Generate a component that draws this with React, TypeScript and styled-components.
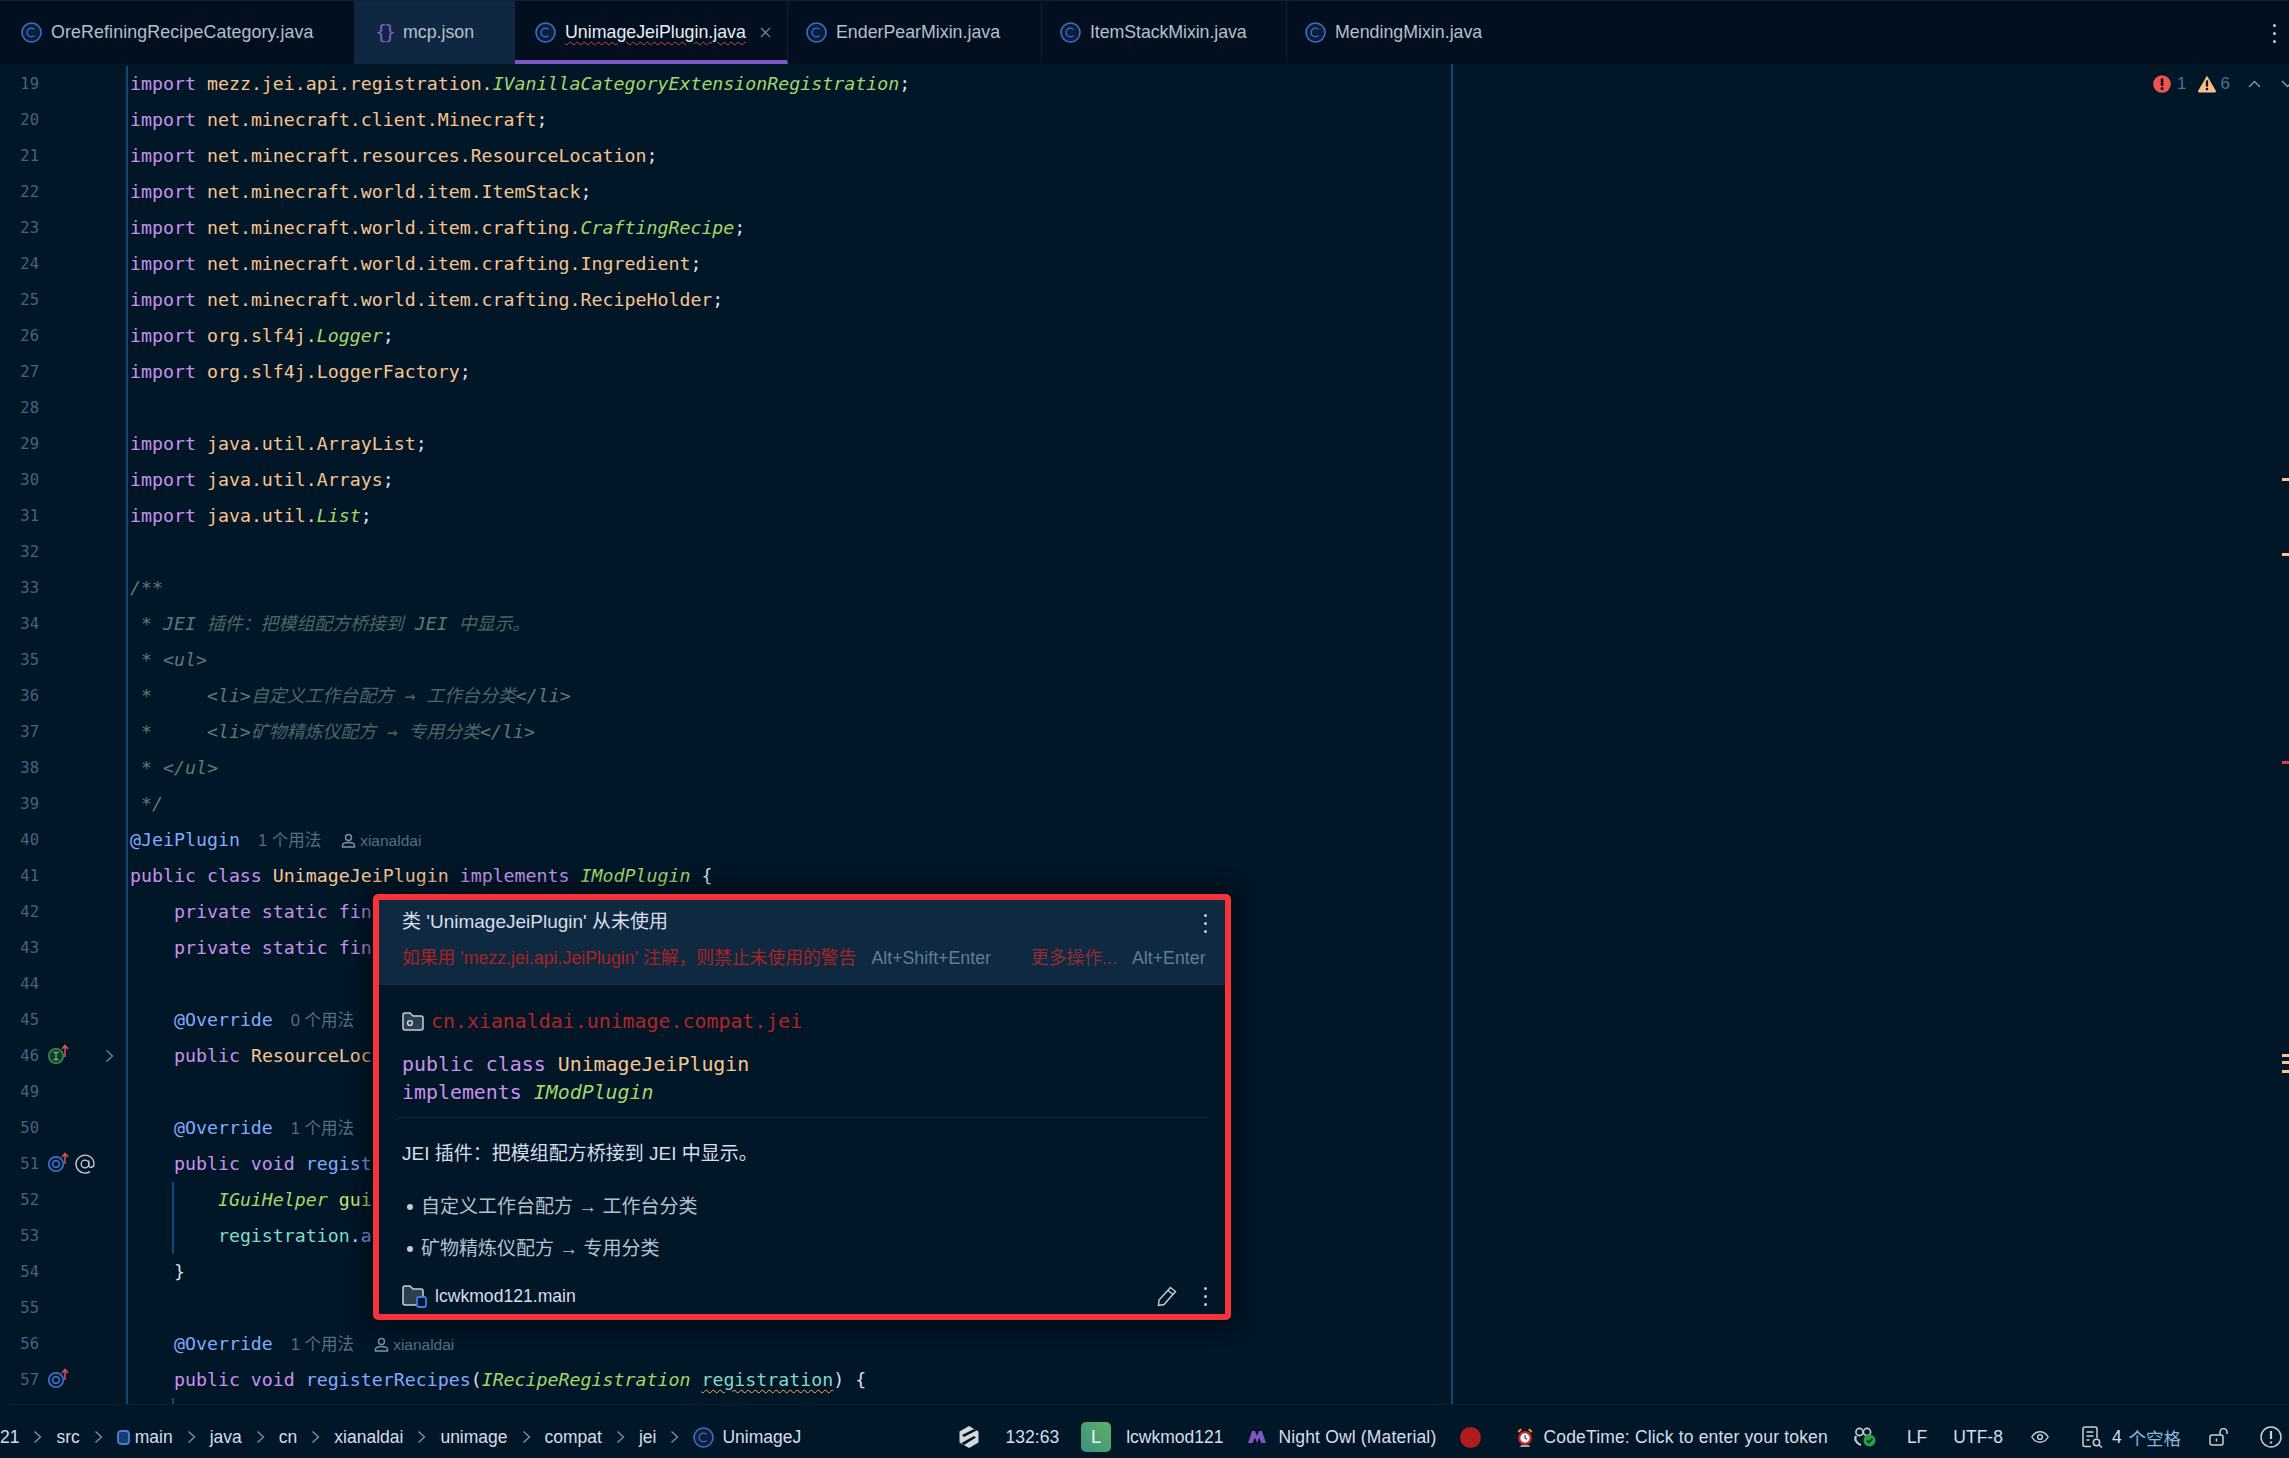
import React from "react";
import styled, { createGlobalStyle } from "styled-components";

const Global = createGlobalStyle`
  html, body { margin: 0; padding: 0; background: #011627; }
  #root { width: 2289px; height: 1458px; overflow: hidden; }
`;

const SANS = `"Liberation Sans", "Noto Sans CJK SC", sans-serif`;
const MONO = `"DejaVu Sans Mono", "Noto Sans CJK SC", monospace`;

const Window = styled.div`
  width: 2289px; height: 1458px; display: flex; flex-direction: column;
  background: #011627; color: #d6deeb; font-family: ${SANS};
`;
const TabBar = styled.div`
  height: 64px; flex: none; display: flex; background: #010f1f; border-top: 1px solid #0b2236; box-sizing: border-box;
  position: relative;
`;
const Tab = styled.div<{ $w: number; $pad: number; $bg?: string; $active?: boolean; $sep?: boolean }>`
  width: ${p => p.$w}px; padding: 3px 0 0 ${p => p.$pad}px; box-sizing: border-box; display: flex; align-items: center; gap: 9px;
  font-size: 17.8px; color: ${p => (p.$active ? "#e6edf5" : "#b4c0cc")};
  background: ${p => p.$bg || "transparent"};
  border-bottom: 4px solid ${p => (p.$active ? "#7e57c2" : "transparent")};
  border-right: ${p => (p.$sep ? "1px solid #0c2234" : "none")};
`;
const TabName = styled.span<{ $err?: boolean; $ls?: number }>`
  letter-spacing: ${p => p.$ls || 0}px;
  ${p => p.$err && "text-decoration: underline wavy #d8433f; text-decoration-thickness: 1px; text-underline-offset: 3px;"}
`;
const Close = styled.span`
  margin-left: 5px; display: flex;
`;
const Braces = styled.span`
  width: 20px; font-family: "DejaVu Sans Mono", monospace; font-size: 20px; color: #7a5fc4; text-align: center; letter-spacing: -3px; flex: none;
`;
const Kebab = styled.div<{ $top: number; $right: number }>`
  position: absolute; top: ${p => p.$top}px; right: ${p => p.$right}px; display: flex; flex-direction: column; gap: 5px;
  & > i { width: 3px; height: 3px; border-radius: 50%; background: #c3ccd6; display: block; }
`;

const Editor = styled.div`
  flex: 1; min-height: 0; position: relative; overflow: hidden; padding-top: 2px; box-sizing: border-box;
  border-bottom: 1px solid #06202f; border-radius: 0 0 0 10px;
`;
const Row = styled.div`
  height: 36px; display: flex; align-items: stretch;
`;
const Gutter = styled.div`
  width: 126px; flex: none; display: flex; align-items: center; position: relative;
`;
const LineNo = styled.span`
  width: 39px; text-align: right; font-family: "DejaVu Sans Mono", monospace; font-size: 15.5px; color: #4b6479; flex: none;
`;
const GutterIcons = styled.span`
  margin-left: 9px; display: flex; align-items: center; gap: 3px;
`;
const Fold = styled.span`
  position: absolute; left: 105px; top: 11px; display: flex;
`;
const Code = styled.div`
  flex: 1; border-left: 2px solid #0d4a78; padding-left: 2px;
  font-family: ${MONO}; font-size: 18.25px; line-height: 36px; white-space: pre; position: relative; color: #d6deeb;
`;
const Indent = styled.span`
  position: absolute; left: 44px; top: 0; bottom: 0; width: 2px; background: #0d4a78;
`;
const Kw = styled.span` color: #c792ea; `;
const Pkg = styled.span` color: #f6c48f; `;
const Cls = styled.span` color: #a6d66a; font-style: italic; `;
const Anno = styled.span` color: #82aaff; `;
const Fn = styled.span` color: #82aaff; `;
const Var = styled.span` color: #7fdbca; `;
const Yel = styled.span` color: #c5e478; `;
const Cmt = styled.span` color: #5f7a7a; font-style: italic; `;
const Zh = styled.span` color: #4c6767; font-size: 17.9px; `;
const Wavy = styled.span`
  color: #7fdbca; text-decoration: underline wavy #f0b06a; text-decoration-thickness: 1px; text-underline-offset: 3px;
`;
const Hint = styled.span`
  margin-left: 18px; font-family: ${SANS}; font-size: 16.5px; color: #55707f;
`;
const Author = styled.span`
  margin-left: 20px; font-family: ${SANS}; font-size: 15.5px; color: #55707f;
  & svg { vertical-align: -2px; margin-right: 4px; }
`;
const RightGuide = styled.div`
  position: absolute; left: 1451px; top: 0; bottom: 0; width: 2px; background: #0d4a78;
`;
const Inspect = styled.div`
  position: absolute; left: 2153px; right: 0; top: 8px; height: 24px; font-size: 17px; color: #44749c;
  display: flex; align-items: center; overflow: hidden;
`;
const InspectNum = styled.span<{ $ml: number }>` margin-left: ${p => p.$ml}px; flex: none; display: flex; `;
const Stripe = styled.div<{ $y: number; $c: string }>`
  position: absolute; right: 0; top: ${p => p.$y}px; width: 7px; height: 3px; background: ${p => p.$c};
`;

const Popup = styled.div`
  position: absolute; left: 373px; top: 830px; width: 858px; height: 426px; box-sizing: border-box;
  border: 6px solid #f4343a; border-radius: 5px; background: #011627; display: flex; flex-direction: column;
  box-shadow: 0 0 18px 6px rgba(0, 8, 18, 0.7);
`;
const PopHead = styled.div`
  height: 85px; flex: none; background: #0e2940; border-bottom: 1px solid #12304a; box-sizing: border-box; padding: 4px 18px 0 23px; position: relative;
`;
const PopTitle = styled.div`
  height: 36px; line-height: 36px; color: #d6deeb; font-size: 19px;
`;
const PopActions = styled.div`
  height: 36px; line-height: 36px; display: flex; font-size: 17.8px; color: #5f7e97;
`;
const RedAct = styled.span<{ $dim?: boolean; $ml?: number }>`
  color: ${p => (p.$dim ? "#8e2e36" : "#a92325")}; margin-left: ${p => p.$ml || 0}px;
`;
const Key = styled.span<{ $ml: number }>` margin-left: ${p => p.$ml}px; `;
const PopBody = styled.div`
  padding: 21px 18px 0 23px; flex: 1; position: relative;
`;
const PkgLine = styled.div`
  display: flex; align-items: center; gap: 7px; font-family: ${MONO}; font-size: 19.9px; color: #b32424; height: 30px;
`;
const Sig = styled.div`
  font-family: ${MONO}; font-size: 19.9px; line-height: 28px; margin-top: 15px; white-space: pre;
`;
const Rule = styled.div`
  height: 1px; background: #12293c; margin: 10px 0 0 -4px;
`;
const Doc = styled.div`
  margin-top: 21px; height: 30px; line-height: 30px; font-size: 19px; color: #d6deeb;
`;
const Bullet = styled.div<{ $mt: number }>`
  margin-top: ${p => p.$mt}px; height: 30px; line-height: 30px; font-size: 19px; color: #b4c2d0; display: flex; align-items: center; padding-left: 5px; gap: 8px;
  &::before { content: ""; width: 6px; height: 6px; border-radius: 50%; background: #c3ccd6; }
`;
const PopFoot = styled.div`
  position: absolute; left: 23px; right: 18px; bottom: 0; height: 36px; display: flex; align-items: center; gap: 8px; font-size: 17.6px; color: #d6deeb;
`;
const FootRight = styled.div`
  margin-left: auto; display: flex; align-items: center; gap: 27px;
`;
const VDots = styled.div`
  display: flex; flex-direction: column; gap: 5px;
  & > i { width: 3px; height: 3px; border-radius: 50%; background: #c3ccd6; display: block; }
`;
const HeadDots = styled.div`
  position: absolute; right: 18px; top: 14px;
`;

const Status = styled.div`
  height: 53px; flex: none; box-sizing: border-box; padding-top: 11px; display: flex; align-items: center; font-size: 17.5px; color: #d6deeb; background: #011627;
`;
const Crumbs = styled.div`
  width: 805px; flex: none; display: flex; align-items: center; gap: 14px; overflow: hidden; white-space: nowrap;
`;
const CrumbItem = styled.span<{ $gap?: number }>`
  display: inline-flex; align-items: center; gap: ${p => p.$gap || 5}px; flex: none;
`;
const Right = styled.div`
  margin-left: auto; padding-right: 7px; display: flex; align-items: center; white-space: nowrap;
`;
const SItem = styled.span<{ $ml: number; $wide?: boolean }>`
  margin-left: ${p => p.$ml}px; display: inline-flex; align-items: center; flex: none;
  ${p => p.$wide && "letter-spacing: 0.17px;"}
`;
const Badge = styled.span`
  width: 30px; height: 30px; border-radius: 5px; background: linear-gradient(45deg, #3a917f, #5fb065); color: #eef7f0; display: flex; align-items: center; justify-content: center; font-size: 18px;
`;
const RedDot = styled.span`
  width: 21px; height: 21px; border-radius: 50%; background: #b01c1c; display: block;
`;
const Blue = styled.span` color: #8db6dc; margin-left: 2px; `;

const ClassIcon = ({ size = 21 }: { size?: number }) => (
  <svg width={size} height={size} viewBox="0 0 21 21" style={{ flex: "none" }}>
    <circle cx="10.5" cy="10.5" r="9.5" fill="#0e1e3a" stroke="#3f6fc6" strokeWidth="1.6" />
    <path d="M13.6 7.4a4.4 4.4 0 1 0 0 6.2" fill="none" stroke="#3f6fc6" strokeWidth="1.3" />
  </svg>
);
const CloseIcon = () => (
  <svg width="11" height="11" viewBox="0 0 12 12"><path d="M1 1l10 10M11 1L1 11" stroke="#78858f" strokeWidth="1.4" /></svg>
);
const Person = () => (
  <svg width="15" height="15" viewBox="0 0 15 15" fill="none" stroke="#7f93a3" strokeWidth="1.4">
    <circle cx="7.5" cy="4.5" r="3" />
    <path d="M1.5 14v-1.5c0-2 2-3 6-3s6 1 6 3V14z" />
  </svg>
);
const ImplIcon = () => (
  <svg width="23" height="22" viewBox="0 0 23 22" fill="none" style={{ marginTop: -3 }}>
    <circle cx="8" cy="12" r="7.2" fill="#0f3a2a" stroke="#3f8a4f" strokeWidth="1.6" />
    <path d="M5.5 8.5h5M5.5 15.5h5M8 8.5v7" stroke="#6fae6a" strokeWidth="1.3" />
    <path d="M17 13V2M14 5l3-3.5L20 5" stroke="#d9535f" strokeWidth="1.5" />
  </svg>
);
const OverIcon = () => (
  <svg width="23" height="22" viewBox="0 0 23 22" fill="none" style={{ marginTop: -3 }}>
    <circle cx="8" cy="12" r="7.2" stroke="#3f6fc6" strokeWidth="1.8" />
    <circle cx="8" cy="12" r="3.4" stroke="#3f6fc6" strokeWidth="1.8" />
    <path d="M17 12V2M14 5l3-3.5L20 5" stroke="#d9535f" strokeWidth="1.5" />
  </svg>
);
const AtIcon = () => (
  <svg width="22" height="22" viewBox="0 0 22 22" fill="none" stroke="#c8d0d8" strokeWidth="1.3">
    <circle cx="11" cy="11" r="3.8" />
    <path d="M14.8 7.5v5c0 2.6 5.2 2.6 5.2-1.5a9 9 0 1 0-4 7.6" />
  </svg>
);
const ChevronR = ({ c = "#8295a5" }: { c?: string }) => (
  <svg width="9" height="14" viewBox="0 0 9 14" style={{ flex: "none" }}>
    <path d="M1.5 1.5L7.5 7l-6 5.5" fill="none" stroke={c} strokeWidth="1.3" />
  </svg>
);
const Cv = ({ up }: { up?: boolean }) => (
  <svg width="13" height="8" viewBox="0 0 13 8" style={{ display: "block" }}>
    <path d={up ? "M1 7l5.5-5.5L12 7" : "M1 1l5.5 5.5L12 1"} fill="none" stroke="#8a9aa8" strokeWidth="1.4" />
  </svg>
);
const PkgIcon = () => (
  <svg width="22" height="20" viewBox="0 0 22 20" style={{ flex: "none" }} fill="none">
    <path d="M1 4a2 2 0 0 1 2-2h5l3 3h8a2 2 0 0 1 2 2v10a2 2 0 0 1-2 2H3a2 2 0 0 1-2-2z" fill="#2a3f50" stroke="#c8d0d8" strokeWidth="1.5" />
    <circle cx="8" cy="12" r="2.4" stroke="#d6deeb" strokeWidth="1.4" />
  </svg>
);
const ModuleIcon = () => (
  <svg width="25" height="24" viewBox="0 0 25 24" style={{ flex: "none" }} fill="none">
    <path d="M1 4a2 2 0 0 1 2-2h5l3 3h8a2 2 0 0 1 2 2v12a2 2 0 0 1-2 2H3a2 2 0 0 1-2-2z" fill="#2a3f50" stroke="#c8d0d8" strokeWidth="1.5" />
    <rect x="15" y="13" width="9" height="10" rx="2" fill="#011627" stroke="#3f7fe0" strokeWidth="1.8" />
  </svg>
);
const Pencil = () => (
  <svg width="20" height="20" viewBox="0 0 20 20" fill="none" stroke="#c8d0d8" strokeWidth="1.4">
    <path d="M13.5 1.5l5 4L7 18.5l-5.5 1 .5-5.5z" />
    <path d="M11 4.5l5 4" />
  </svg>
);
const ErrIcon = () => (
  <svg width="18" height="18" viewBox="0 0 19 19" style={{ flex: "none" }}><circle cx="9.5" cy="9.5" r="9.3" fill="#ef5350" />
    <rect x="8.2" y="3.5" width="2.8" height="8" rx="1" fill="#1a1014" /><circle cx="9.6" cy="14.2" r="1.6" fill="#1a1014" /></svg>
);
const WarnIcon = () => (
  <svg width="18" height="18" viewBox="0 0 19 18" style={{ flex: "none" }}><path d="M9.5 1L18.5 16.5Q18.8 17.5 18 17.5H1Q.2 17.5.5 16.5z" fill="#f4c088" stroke="#f4c088" strokeLinejoin="round" />
    <rect x="8.3" y="5" width="2.4" height="7" rx=".8" fill="#1a1410" /><circle cx="9.5" cy="14.4" r="1.4" fill="#1a1410" /></svg>
);
const ModSquare = () => (
  <svg width="13" height="15" viewBox="0 0 13 15" style={{ flex: "none" }}><rect x="1" y="1" width="11" height="13" rx="3" fill="#1a3c74" stroke="#4a7fdc" strokeWidth="1.8" /></svg>
);
const VcsIcon = () => (
  <svg width="20" height="22" viewBox="0 0 20 22">
    <path d="M10 0l9.5 5.5v11L10 22 .5 16.5v-11z" fill="#d4d9de" />
    <path d="M3 9l12-6 2.5 1.6L5 11zM2.5 17l12.5-7 2 1.4L5 19z" fill="#011627" />
  </svg>
);
const MIcon = () => (
  <svg width="18" height="12" viewBox="0 0 18 12"><path d="M0 12L4 0h3l2 5 2-5h3l4 12h-4.5L11 6.5 9 12 7 6.5 4.5 12z" fill="#7e57c2" /></svg>
);
const Clock = () => (
  <svg width="16" height="19" viewBox="0 0 16 19" fill="none">
    <circle cx="8" cy="10" r="5.8" fill="#f4f6f8" stroke="#c62828" strokeWidth="2.2" />
    <path d="M8 7v3l2 1.4" stroke="#333" strokeWidth="1.1" />
    <path d="M1.2 4l3-2.8M14.8 4l-3-2.8" stroke="#e0a030" strokeWidth="2" />
    <path d="M3.5 18h9" stroke="#9aa5ae" strokeWidth="2" />
  </svg>
);
const Copilot = () => (
  <svg width="22" height="20" viewBox="0 0 22 20" fill="none">
    <circle cx="5.5" cy="5" r="3.6" stroke="#c8d0d8" strokeWidth="1.6" />
    <circle cx="13" cy="5" r="3.6" stroke="#c8d0d8" strokeWidth="1.6" />
    <path d="M2 9c-1.5 3-.5 7 5 9" stroke="#c8d0d8" strokeWidth="2.2" />
    <circle cx="15.5" cy="13.5" r="6" fill="#25a244" />
    <path d="M12.8 13.5l2 2 3.6-3.8" stroke="#04210e" strokeWidth="1.5" />
  </svg>
);
const Eye = () => (
  <svg width="18" height="12" viewBox="0 0 18 12" fill="none" stroke="#c8d0d8" strokeWidth="1.4">
    <path d="M.8 6C3 2.5 5.8.8 9 .8S15 2.5 17.2 6C15 9.5 12.2 11.2 9 11.2S3 9.5.8 6z" /><circle cx="9" cy="6" r="2.4" />
  </svg>
);
const DocSearch = () => (
  <svg width="21" height="22" viewBox="0 0 21 22" fill="none" stroke="#c8d0d8" strokeWidth="1.5">
    <path d="M9 20.5H3a2 2 0 0 1-2-2V3a2 2 0 0 1 2-2h10a2 2 0 0 1 2 2v9" />
    <path d="M4.5 6h7M4.5 10h7M4.5 14h3" />
    <circle cx="14.5" cy="16.5" r="3.2" /><path d="M17 19l3 2.5" />
  </svg>
);
const Lock = () => (
  <svg width="20" height="18" viewBox="0 0 20 18" fill="none" stroke="#c8d0d8" strokeWidth="1.5">
    <rect x="1" y="7" width="13" height="10" rx="2" />
    <path d="M7.5 10.5v3" /><path d="M11 7V4a3.5 3.5 0 0 1 7 0v2" />
  </svg>
);
const Alert = () => (
  <svg width="22" height="22" viewBox="0 0 22 22" fill="none" stroke="#c8d0d8" strokeWidth="1.5">
    <circle cx="11" cy="11" r="10" />
    <path d="M11 5v8M11 15.5v2" strokeWidth="2.2" />
  </svg>
);

const imp = (pkg: string, cls?: string) => (
  <>
    <Kw>import</Kw> <Pkg>{pkg}</Pkg>
    {cls && <Cls>{cls}</Cls>};
  </>
);
const Uses = ({ n }: { n: number }) => <Hint>{n} 个用法</Hint>;

type L = { n: number; icons?: React.ReactNode; fold?: boolean; guide?: boolean; noNum?: boolean; body?: React.ReactNode };
const I4 = "    ";
const lines: L[] = [
  { n: 19, body: imp("mezz.jei.api.registration.", "IVanillaCategoryExtensionRegistration") },
  { n: 20, body: imp("net.minecraft.client.Minecraft") },
  { n: 21, body: imp("net.minecraft.resources.ResourceLocation") },
  { n: 22, body: imp("net.minecraft.world.item.ItemStack") },
  { n: 23, body: imp("net.minecraft.world.item.crafting.", "CraftingRecipe") },
  { n: 24, body: imp("net.minecraft.world.item.crafting.Ingredient") },
  { n: 25, body: imp("net.minecraft.world.item.crafting.RecipeHolder") },
  { n: 26, body: imp("org.slf4j.", "Logger") },
  { n: 27, body: imp("org.slf4j.LoggerFactory") },
  { n: 28 },
  { n: 29, body: imp("java.util.ArrayList") },
  { n: 30, body: imp("java.util.Arrays") },
  { n: 31, body: imp("java.util.", "List") },
  { n: 32 },
  { n: 33, body: <Cmt>/**</Cmt> },
  { n: 34, body: <Cmt> * JEI <Zh>插件：把模组配方桥接到</Zh> JEI <Zh>中显示。</Zh></Cmt> },
  { n: 35, body: <Cmt> * &lt;ul&gt;</Cmt> },
  { n: 36, body: <Cmt> *     &lt;li&gt;<Zh>自定义工作台配方 → 工作台分类</Zh>&lt;/li&gt;</Cmt> },
  { n: 37, body: <Cmt> *     &lt;li&gt;<Zh>矿物精炼仪配方 → 专用分类</Zh>&lt;/li&gt;</Cmt> },
  { n: 38, body: <Cmt> * &lt;/ul&gt;</Cmt> },
  { n: 39, body: <Cmt> */</Cmt> },
  { n: 40, body: <><Anno>@JeiPlugin</Anno><Uses n={1} /><Author><Person />xianaldai</Author></> },
  { n: 41, body: <><Kw>public class</Kw> <Pkg>UnimageJeiPlugin</Pkg> <Kw>implements</Kw> <Cls>IModPlugin</Cls> {"{"}</> },
  { n: 42, body: <>{I4}<Kw>private static fin</Kw></> },
  { n: 43, body: <>{I4}<Kw>private static fin</Kw></> },
  { n: 44 },
  { n: 45, body: <>{I4}<Anno>@Override</Anno><Uses n={0} /></> },
  { n: 46, icons: <ImplIcon />, fold: true, body: <>{I4}<Kw>public</Kw> <Pkg>ResourceLoc</Pkg></> },
  { n: 49 },
  { n: 50, body: <>{I4}<Anno>@Override</Anno><Uses n={1} /></> },
  { n: 51, icons: <><OverIcon /><AtIcon /></>, body: <>{I4}<Kw>public void</Kw> <Fn>regist</Fn></> },
  { n: 52, guide: true, body: <>{I4}{I4}<Cls>IGuiHelper</Cls> <Yel>gui</Yel></> },
  { n: 53, guide: true, body: <>{I4}{I4}<Var>registration</Var>.<Fn>a</Fn></> },
  { n: 54, body: <>{I4}{"}"}</> },
  { n: 55 },
  { n: 56, body: <>{I4}<Anno>@Override</Anno><Uses n={1} /><Author><Person />xianaldai</Author></> },
  { n: 57, icons: <OverIcon />, body: <>{I4}<Kw>public void</Kw> <Fn>registerRecipes</Fn>(<Cls>IRecipeRegistration</Cls> <Wavy>registration</Wavy>) {"{"}</> },
  { n: 58, guide: true, noNum: true },
];

const tabs = [
  { name: "OreRefiningRecipeCategory.java", w: 354, pad: 21, sep: false, ls: 0.13 },
  { name: "mcp.json", w: 161, pad: 20, json: true, bg: "#0f2740" },
  { name: "UnimageJeiPlugin.java", w: 273, pad: 20, active: true, sep: true },
  { name: "EnderPearMixin.java", w: 254, pad: 18, sep: true },
  { name: "ItemStackMixin.java", w: 245, pad: 18, sep: true, ls: -0.08 },
  { name: "MendingMixin.java", w: 300, pad: 18 },
];

const crumbs = ["src", "main", "java", "cn", "xianaldai", "unimage", "compat", "jei"];

export default function App() {
  return (
    <Window>
      <Global />
      <TabBar>
        {tabs.map(t => (
          <Tab key={t.name} $w={t.w} $pad={t.pad} $bg={t.bg} $active={t.active} $sep={t.sep}>
            {t.json ? <Braces>{"{}"}</Braces> : <ClassIcon />}
            <TabName $err={t.active} $ls={t.ls}>{t.name}</TabName>
            {t.active && <Close><CloseIcon /></Close>}
          </Tab>
        ))}
        <Kebab $top={23} $right={13}><i /><i /><i /></Kebab>
      </TabBar>
      <Editor>
        {lines.map(l => (
          <Row key={l.n}>
            <Gutter>
              <LineNo>{l.noNum ? "" : l.n}</LineNo>
              {l.icons && <GutterIcons>{l.icons}</GutterIcons>}
              {l.fold && <Fold><ChevronR c="#7a8694" /></Fold>}
            </Gutter>
            <Code>
              {l.guide && <Indent />}
              {l.body}
            </Code>
          </Row>
        ))}
        <RightGuide />
        <Inspect>
          <ErrIcon /><InspectNum $ml={6}>1</InspectNum>
          <InspectNum $ml={12}><WarnIcon /></InspectNum><InspectNum $ml={4}>6</InspectNum>
          <InspectNum $ml={18}><Cv up /></InspectNum><InspectNum $ml={20}><Cv /></InspectNum>
        </Inspect>
        {[414, 489, 697, 990, 997, 1006].map((y, i) => (
          <Stripe key={y} $y={y} $c={i === 2 ? "#d9404a" : "#f7c58a"} />
        ))}
        <Popup>
          <PopHead>
            <PopTitle>类 'UnimageJeiPlugin' 从未使用</PopTitle>
            <PopActions>
              <RedAct>如果用 'mezz.jei.api.JeiPlugin' 注解，则禁止未使用的警告</RedAct>
              <Key $ml={15}>Alt+Shift+Enter</Key>
              <RedAct $dim $ml={40}>更多操作...</RedAct>
              <Key $ml={15}>Alt+Enter</Key>
            </PopActions>
            <HeadDots><VDots><i /><i /><i /></VDots></HeadDots>
          </PopHead>
          <PopBody>
            <PkgLine><PkgIcon />cn.xianaldai.unimage.compat.jei</PkgLine>
            <Sig>
              <Kw>public class</Kw> <Pkg>UnimageJeiPlugin</Pkg>{"\n"}
              <Kw>implements</Kw> <Cls>IModPlugin</Cls>
            </Sig>
            <Rule />
            <Doc>JEI 插件：把模组配方桥接到 JEI 中显示。</Doc>
            <Bullet $mt={23}>自定义工作台配方 → 工作台分类</Bullet>
            <Bullet $mt={12}>矿物精炼仪配方 → 专用分类</Bullet>
            <PopFoot>
              <ModuleIcon />lcwkmod121.main
              <FootRight><Pencil /><VDots><i /><i /><i /></VDots></FootRight>
            </PopFoot>
          </PopBody>
        </Popup>
      </Editor>
      <Status>
        <Crumbs>
          <CrumbItem>21</CrumbItem>
          {crumbs.map(c => (
            <React.Fragment key={c}>
              <ChevronR />
              <CrumbItem>{c === "main" && <ModSquare />}{c}</CrumbItem>
            </React.Fragment>
          ))}
          <ChevronR />
          <CrumbItem $gap={8}><ClassIcon />UnimageJ</CrumbItem>
        </Crumbs>
        <Right>
          <SItem $ml={0}><VcsIcon /></SItem>
          <SItem $ml={27}>132:63</SItem>
          <SItem $ml={22}><Badge>L</Badge></SItem>
          <SItem $ml={15}>lcwkmod121</SItem>
          <SItem $ml={25}><MIcon /></SItem>
          <SItem $ml={12} $wide>Night Owl (Material)</SItem>
          <SItem $ml={24}><RedDot /></SItem>
          <SItem $ml={36}><Clock /></SItem>
          <SItem $ml={10} $wide>CodeTime: Click to enter your token</SItem>
          <SItem $ml={26}><Copilot /></SItem>
          <SItem $ml={31}>LF</SItem>
          <SItem $ml={26}>UTF-8</SItem>
          <SItem $ml={28}><Eye /></SItem>
          <SItem $ml={33}><DocSearch /></SItem>
          <SItem $ml={9}>4&nbsp;<Blue>个空格</Blue></SItem>
          <SItem $ml={28}><Lock /></SItem>
          <SItem $ml={31}><Alert /></SItem>
        </Right>
      </Status>
    </Window>
  );
}
